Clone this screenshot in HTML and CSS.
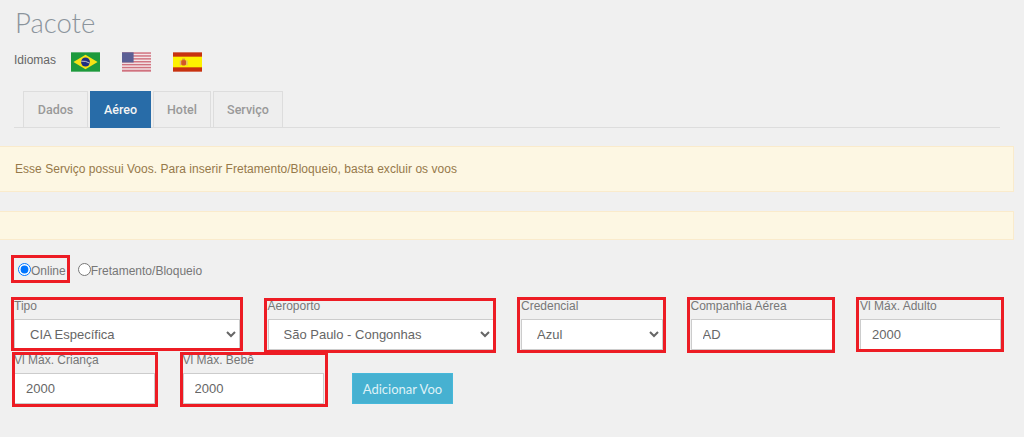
FILE: index.html
```html
<!DOCTYPE html>
<html lang="pt-BR">
<head>
<meta charset="utf-8">
<title>Pacote</title>
<link rel="stylesheet" href="styles.css">
</head>
<body>
<h1 class="title">Pacote</h1>
<div class="langs">
  <span class="langs-label">Idiomas</span>
  <svg class="flag" width="29" height="20" viewBox="0 0 30 20"><rect width="30" height="20" fill="#1d9a3c"/><polygon points="15,2.5 27.5,10 15,17.5 2.5,10" fill="#f5e216"/><circle cx="15" cy="10" r="4.6" fill="#1f2f80"/><path d="M10.6 9.2q4.5-.6 8.8 2" stroke="#e8e8e8" stroke-width=".8" fill="none"/></svg>
  <svg class="flag" width="29" height="20" viewBox="0 0 30 20"><rect width="30" height="20" fill="#f3e6e8"/><g fill="#d0727f"><rect width="30" height="1.5"/><rect y="3" width="30" height="1.5"/><rect y="6" width="30" height="1.5"/><rect y="9" width="30" height="1.5"/><rect y="12" width="30" height="1.5"/><rect y="15" width="30" height="1.5"/><rect y="18" width="30" height="2"/></g><rect width="12" height="10.5" fill="#5b5f95"/></svg>
  <svg class="flag" width="29" height="20" viewBox="0 0 30 20"><rect width="30" height="20" fill="#c8320f"/><rect y="4.5" width="30" height="11" fill="#fdf200"/><rect x="8.5" y="8" width="5" height="5.5" rx="1.5" fill="#d2562a"/><rect x="7" y="8.5" width="1.3" height="5" fill="#e0b080"/><rect x="13.7" y="8.5" width="1.3" height="5" fill="#e0b080"/><rect x="9.5" y="6.5" width="3" height="1.6" fill="#d89a30"/></svg>
</div>
<nav class="tabs">
  <a class="tab tab-dados">Dados</a>
  <a class="tab tab-active">Aéreo</a>
  <a class="tab tab-hotel">Hotel</a>
  <a class="tab tab-servico">Serviço</a>
</nav>
<div class="alert alert-text">Esse Serviço possui Voos. Para inserir Fretamento/Bloqueio, basta excluir os voos</div>
<div class="alert alert-empty"></div>
<form class="form">
  <div class="radios">
    <label class="radio"><input type="radio" name="tipo" checked>Online</label>
    <label class="radio"><input type="radio" name="tipo">Fretamento/Bloqueio</label>
  </div>
  <div class="fields">
    <div class="field wide"><label>Tipo</label><select class="control"><option>CIA Específica</option></select></div>
    <div class="field wide"><label>Aeroporto</label><select class="control"><option>São Paulo - Congonhas</option></select></div>
    <div class="field"><label>Credencial</label><select class="control"><option>Azul</option></select></div>
    <div class="field"><label>Companhia Aérea</label><input class="control" value="AD"></div>
    <div class="field narrow"><label>Vl Máx. Adulto</label><input class="control" value="2000"></div>
    <div class="field narrow"><label>Vl Máx. Criança</label><input class="control" value="2000"></div>
    <div class="field narrow"><label>Vl Máx. Bebê</label><input class="control" value="2000"></div>
    <button type="button" class="btn">Adicionar Voo</button>
  </div>
</form>
<i class="mark m-online"></i>
<i class="mark m-tipo"></i>
<i class="mark m-aero"></i>
<i class="mark m-cred"></i>
<i class="mark m-cia"></i>
<i class="mark m-adulto"></i>
<i class="mark m-crianca"></i>
<i class="mark m-bebe"></i>
</body>
</html>
```
FILE: styles.css
```css
* { box-sizing: border-box; }
html, body { height: 100%; }
body {
  margin: 0;
  background: #f0f0f0;
  font-family: "Liberation Sans", Arial, sans-serif;
  font-size: 12px;
  color: #555;
  overflow: hidden;
  position: relative;
}
.title {
  margin: 0;
  padding: 6px 0 0 15px;
  font: 300 27.5px/33px Lato, sans-serif;
  color: #8b949c;
  height: 41px;
}
.langs {
  display: flex;
  align-items: center;
  height: 20px;
  margin-top: 11px;
  padding-left: 14px;
}
.langs-label { width: 57px; font-size: 12px; color: #666; position: relative; top: -2px; }
.flag { margin-right: 22px; display: block; }
.tabs {
  display: flex;
  gap: 2px;
  margin: 19px 24px 0 14px;
  padding-left: 9px;
  height: 37px;
  border-bottom: 1px solid #ddd;
}
.tab {
  height: 37px;
  display: flex;
  align-items: center;
  justify-content: center;
  font: 500 12.5px Roboto, sans-serif;
  color: #999;
  background: #eee;
  border: 1px solid #ddd;
}
.tab-dados { width: 65px; }
.tab-active { width: 61px; background: #286ca8; border-color: #286ca8; color: #f4f4f4; }
.tab-hotel { width: 58px; }
.tab-servico { width: 70px; }
.alert {
  width: 1014px;
  background: #fdf7e3;
  border: 1px solid #faebcc;
  border-left: 0;
  color: #96794a;
}
.alert-text {
  margin-top: 18px;
  height: 46px;
  line-height: 44px;
  padding-left: 15px;
  font-size: 12px;
  letter-spacing: .03px;
}
.alert-empty { margin-top: 19px; height: 29px; }
.radios {
  display: flex;
  gap: 12px;
  padding: 23px 0 0 18px;
  height: 58px;
}
.radio { display: flex; align-items: flex-start; height: 16px; line-height: 17px; color: #777; font-size: 12px; }
.radio input { margin: 0; width: 13px; height: 13px; }
.fields {
  display: flex;
  flex-wrap: wrap;
  padding-left: 14px;
  column-gap: 27.5px;
  row-gap: 2px;
  width: 1010px;
}
.field { width: 142px; height: 52px; display: flex; flex-direction: column; }
.field.wide { width: 226px; }
.field.narrow { width: 141px; }
.field label { height: 21px; line-height: 16px; font-size: 12px; color: #777; }
.control {
  width: 100%;
  height: 31px;
  border: 1px solid #ccc;
  background-color: #fff;
  border-radius: 0;
  font: 13px "Liberation Sans", Arial, sans-serif;
  color: #666;
  padding: 0 11px;
}
.btn {
  width: 101px;
  height: 31px;
  margin: 21px 0 0 1px;
  background: #46b1d1;
  border: 1px solid #46b8da;
  color: #dff1f7;
  font: 400 13px Lato, sans-serif;
  padding: 0;
}
.mark { position: absolute; border: 3px solid #ed1c24; display: block; }
.m-online { left: 11px; top: 255px; width: 59px; height: 28px; }
.m-tipo { left: 11px; top: 297px; width: 232px; height: 54px; }
.m-aero { left: 264px; top: 298px; width: 232px; height: 55px; }
.m-cred { left: 517px; top: 297px; width: 149px; height: 56px; }
.m-cia { left: 687px; top: 297px; width: 148px; height: 56px; }
.m-adulto { left: 856px; top: 297px; width: 148px; height: 55px; }
.m-crianca { left: 12px; top: 352px; width: 146px; height: 55px; }
.m-bebe { left: 180px; top: 352px; width: 148px; height: 55px; }
```
